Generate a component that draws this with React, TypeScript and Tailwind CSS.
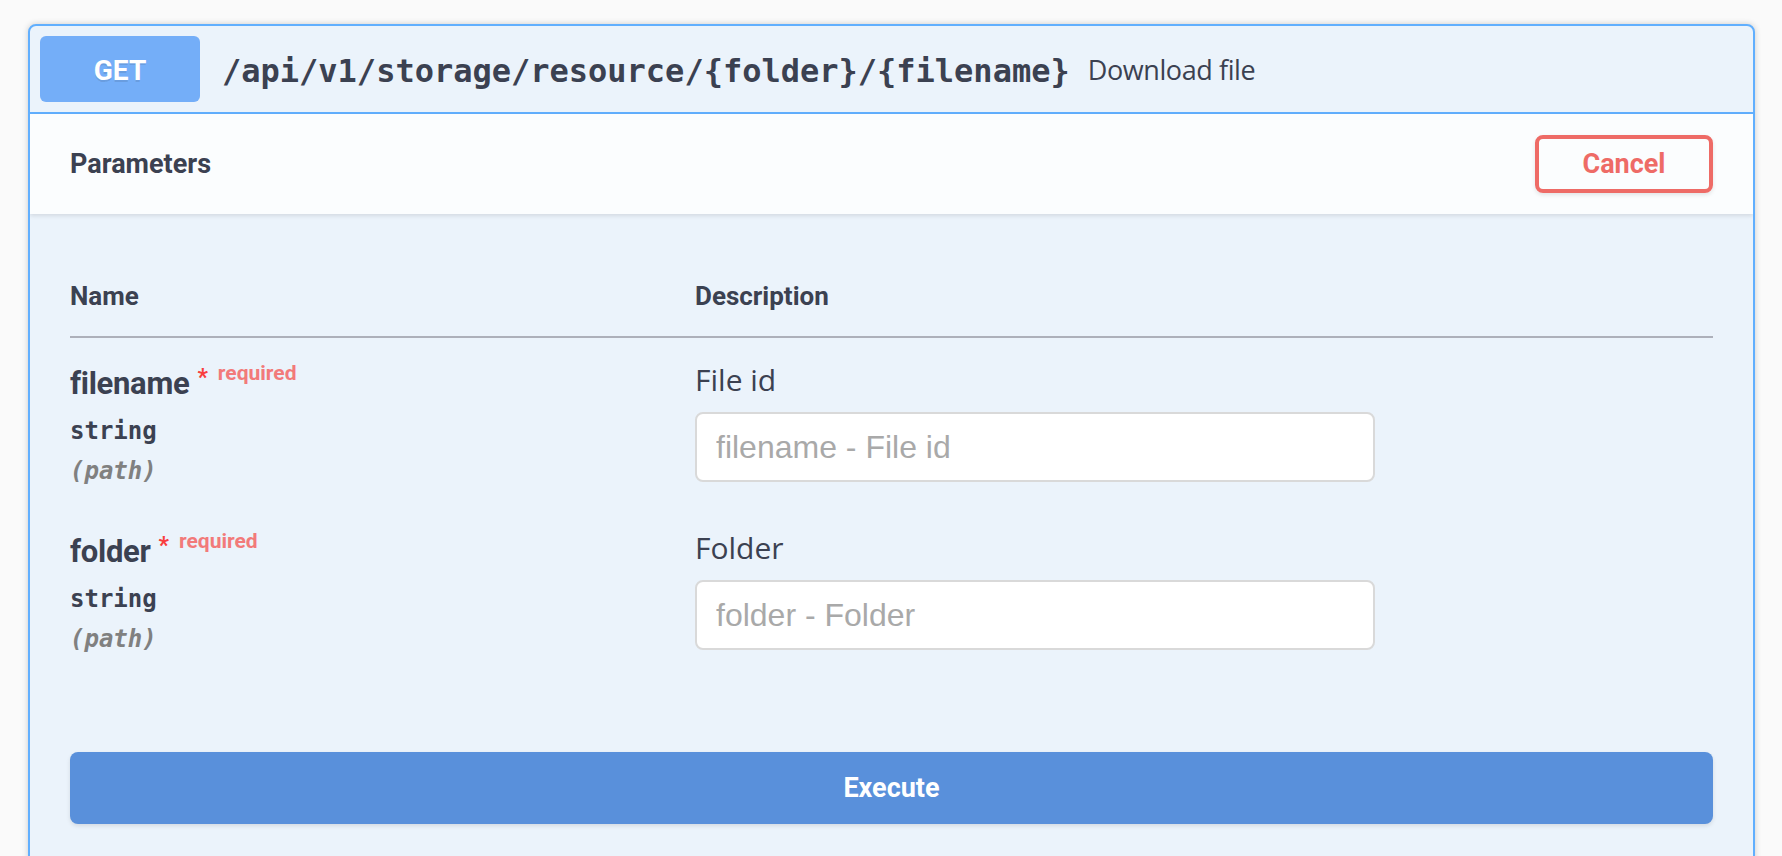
const titleFont = "font-['Roboto','Liberation_Sans',sans-serif]";
const monoFont = "font-['DejaVu_Sans_Mono','Liberation_Mono',monospace]";

interface Param {
  name: string;
  type: string;
  location: string;
  description: string;
}

const params: Param[] = [
  { name: "filename", type: "string", location: "path", description: "File id" },
  { name: "folder", type: "string", location: "path", description: "Folder" },
];

function ParamRow({ param }: { param: Param }) {
  return (
    <div className="flex h-[168px] pt-[20px]">
      <div className="w-[625px] shrink-0">
        <div className={`flex h-[50px] items-start pt-[2px] leading-[48px] ${titleFont}`}>
          <span className="text-[31px] font-bold tracking-[-0.3px] text-[#3b4151]">
            {param.name}
          </span>
          <span className="ml-[8px] text-[23px] font-bold leading-[36px] text-[#f93e3e]">*</span>
          <span className="ml-[10px] text-[21px] font-bold leading-[26px] text-[#f27a7a]">
            required
          </span>
        </div>
        <div className={`pt-[8px] pb-[10px] text-[24px] font-semibold leading-[30px] text-[#3b4151] ${monoFont}`}>
          {param.type}
        </div>
        <div className={`text-[24px] font-semibold italic leading-[30px] text-[#808080] ${monoFont}`}>
          ({param.location})
        </div>
      </div>
      <div className="flex-1">
        <p className="font-['Open_Sans',sans-serif] text-[30px] leading-[44px] text-[#3b4151]">
          {param.description}
        </p>
        <input
          type="text"
          placeholder={`${param.name} - ${param.description}`}
          className="mt-[10px] h-[70px] w-[680px] rounded-[8px] border-2 border-[#d9d9d9] bg-white px-[19px] font-['Liberation_Sans',Arial,sans-serif] text-[32px] text-[#3b4151] outline-none placeholder:text-[#a9a9a9]"
        />
      </div>
    </div>
  );
}

export default function App() {
  return (
    <div className="min-h-screen bg-[#fafafa] pl-[28px] pr-[27px] pt-[24px]">
      <div className="overflow-hidden rounded-[8px] border-2 border-[#61affe] bg-[#ebf3fb] shadow-[0_0_6px_rgba(0,0,0,0.19)]">
        <div className="flex items-center border-b-2 border-[#61affe] p-[10px]">
          <span
            className={`flex h-[66px] w-[160px] items-center justify-center rounded-[6px] bg-[#74aef8] pt-[3px] text-[28px] font-bold text-white [text-shadow:0_2px_0_rgba(0,0,0,0.1)] ${titleFont}`}
          >
            GET
          </span>
          <span className={`pl-[22px] pr-[18px] pt-[3px] text-[32px] font-bold text-[#3b4151] ${monoFont}`}>
            /api/v1/storage/resource/{"{folder}"}/{"{filename}"}
          </span>
          <span className="pt-[3px] font-['Open_Sans',sans-serif] text-[27px] tracking-[-0.4px] text-[#3b4151]">
            Download file
          </span>
        </div>

        <div className="flex min-h-[100px] items-center justify-between bg-white/80 px-[40px] py-[16px] shadow-[0_2px_4px_rgba(0,0,0,0.1)]">
          <h4 className={`text-[27px] font-bold text-[#3b4151] ${titleFont}`}>Parameters</h4>
          <button
            type="button"
            className={`h-[58px] w-[178px] rounded-[8px] border-[4px] border-[#ee6b66] bg-transparent text-[27px] font-bold text-[#ee6b66] shadow-[0_2px_4px_rgba(0,0,0,0.1)] ${titleFont}`}
          >
            Cancel
          </button>
        </div>

        <div className="p-[40px]">
          <div
            className={`flex border-b-2 border-[#adb0ba] pt-[24px] pb-[22px] text-[26px] font-bold leading-[36px] text-[#3b4151] ${titleFont}`}
          >
            <div className="w-[625px] shrink-0">Name</div>
            <div className="flex-1">Description</div>
          </div>
          {params.map((p) => (
            <ParamRow key={p.name} param={p} />
          ))}
        </div>

        <div className="px-[40px] pt-[38px] pb-[40px]">
          <button
            type="button"
            className={`h-[72px] w-full rounded-[8px] bg-[#5990db] text-[27px] font-bold text-white shadow-[0_2px_4px_rgba(0,0,0,0.1)] ${titleFont}`}
          >
            Execute
          </button>
        </div>
      </div>
    </div>
  );
}
